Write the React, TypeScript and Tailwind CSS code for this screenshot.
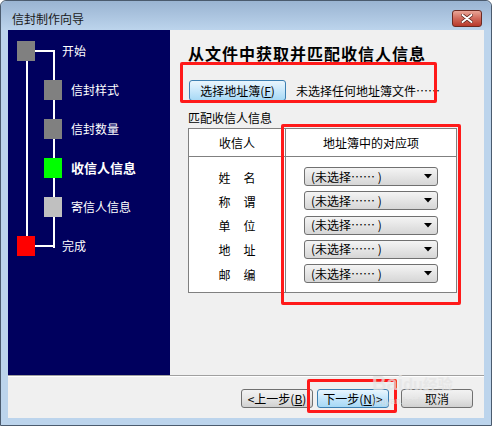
import { Fragment } from "react";

const font = "font-['SimSun','Noto_Sans_CJK_SC','Liberation_Sans',sans-serif]";

const steps = [
  { id: 1, name: "开始", color: "bg-[#808080]", top: true },
  { id: 2, name: "信封样式", color: "bg-[#808080]" },
  { id: 3, name: "信封数量", color: "bg-[#808080]" },
  { id: 4, name: "收信人信息", color: "bg-[#00ff00]", current: true },
  { id: 5, name: "寄信人信息", color: "bg-[#c0c0c0]" },
  { id: 6, name: "完成", color: "bg-[#ff0000]", top: true },
];

const fields = [
  ["姓", "名"],
  ["称", "谓"],
  ["单", "位"],
  ["地", "址"],
  ["邮", "编"],
];

const StepTree = () => (
  <div className="relative w-[162px] h-[345px] bg-[#00005e] pt-[1px]">
    {/* connecting lines */}
    <svg className="absolute inset-0" width="162" height="345">
      <rect x="18" y="30" width="2" height="176" fill="#fff" />
      <rect x="45" y="20" width="2" height="198" fill="#fff" />
      <rect x="27" y="20" width="19" height="2" fill="#fff" />
      <rect x="27" y="215" width="19" height="2" fill="#fff" />
    </svg>
    <div className="relative flex flex-col">
      {steps.map((s) => (
        <div key={s.id} className="h-[39px] flex items-center">
          <div
            className={`w-[18px] h-[20px] ${s.color} ${s.top ? "ml-[9px]" : "ml-[36px]"}`}
          />
          <span
            className={`text-white text-[12px] leading-[14px] ${
              s.top ? "ml-[27px]" : "ml-[9px]"
            } ${s.current ? "font-bold text-[13px]" : ""}`}
          >
            {s.name}
          </span>
        </div>
      ))}
    </div>
  </div>
);

const Select = () => (
  <div className="w-[134px] h-[19px] rounded-[3px] border border-[#707070] bg-gradient-to-b from-[#f4f4f4] to-[#d6d6d6] flex items-center pl-[6px] pr-[5px]">
    <span className="flex-1 text-[12px] leading-[14px] text-black">(未选择…… )</span>
    <svg width="8" height="5" viewBox="0 0 8 5">
      <path d="M0 0H8L4 4.5Z" fill="#000" />
    </svg>
  </div>
);

const Btn = ({ children, active }: { children: React.ReactNode; active?: boolean }) => (
  <div
    className={`w-[72px] h-[19px] rounded-[3px] border flex items-center justify-center text-[12px] leading-[14px] text-black ${
      active
        ? "border-[#3c7fb1] bg-gradient-to-b from-[#eaf6fd] via-[#c4e6fb] to-[#a7d9f5]"
        : "border-[#707070] bg-gradient-to-b from-[#f2f2f2] via-[#e6e6e6] to-[#d0d0d0]"
    }`}
  >
    {children}
  </div>
);

export default function App() {
  return (
    <div className={`relative w-[492px] h-[426px] overflow-hidden ${font}`}>
      <div className="w-[492px] h-[426px] bg-[#bcd4ec] border border-[#4b5b6e] rounded-t-[6px] flex flex-col">
        {/* title bar */}
        <div className="h-[29px] flex items-start bg-gradient-to-b from-[#9ab4d2] to-[#bcd4ec] rounded-t-[6px]">
          <span className="ml-[11px] mt-[11px] text-[12px] leading-[14px] text-[#1a1a1a]">
            信封制作向导
          </span>
          <div className="ml-auto mr-[9px] mt-[9px] w-[30px] h-[17px] rounded-[3px] border border-[#6b2a22] bg-gradient-to-b from-[#e9a698] via-[#d0695b] to-[#b8392b] flex items-center justify-center">
            <svg width="12" height="9" viewBox="0 0 12 9">
              <path
                d="M1.5 1 L10.5 8 M10.5 1 L1.5 8"
                stroke="#5a2018"
                strokeWidth="3.4"
                strokeLinecap="round"
              />
              <path
                d="M1.5 1 L10.5 8 M10.5 1 L1.5 8"
                stroke="#fff"
                strokeWidth="2"
                strokeLinecap="round"
              />
            </svg>
          </div>
        </div>

        {/* client area */}
        <div className="ml-[7px] w-[476px] h-[388px] bg-[#f0f0f0] flex flex-col">
          <div className="flex h-[345px]">
            <StepTree />
            <div className="flex-1 pl-[18px] pt-[13px] flex flex-col items-start">
              <h1 className="text-[16px] leading-[20px] font-bold tracking-[1px] text-black">
                从文件中获取并匹配收信人信息
              </h1>
              <div className="mt-[17px] ml-[1px] flex items-center">
                <div className="w-[97px] h-[21px] rounded-[3px] border border-[#3c7fb1] bg-gradient-to-b from-[#eaf6fd] via-[#c9e8fb] to-[#a7d9f5] flex items-center justify-center text-[12px] leading-[14px] text-black">
                  选择地址簿(<u>F</u>)
                </div>
                <span className="ml-[10px] text-[12px] leading-[14px] text-black">
                  未选择任何地址簿文件……
                </span>
              </div>
              <div className="mt-[10px] text-[12px] leading-[14px] text-black">匹配收信人信息</div>
              <div className="mt-[3px] w-[269px] h-[165px] border border-[#808080] bg-white flex flex-col">
                <div className="flex h-[28px] border-b border-[#808080]">
                  <div className="w-[97px] border-r border-[#808080] flex items-center justify-center text-[12px] text-black">
                    收信人
                  </div>
                  <div className="flex-1 flex items-center justify-center text-[12px] text-black">
                    地址簿中的对应项
                  </div>
                </div>
                <div className="flex flex-1">
                  <div className="w-[97px] border-r border-[#808080] pt-[11px] flex flex-col gap-[5.25px]">
                    {fields.map(([a, b]) => (
                      <div
                        key={a}
                        className="h-[19px] flex items-center justify-center gap-[13px] text-[12px] text-black"
                      >
                        <span>{a}</span>
                        <span>{b}</span>
                      </div>
                    ))}
                  </div>
                  <div className="flex-1 pt-[10px] flex flex-col items-center gap-[5.25px]">
                    {fields.map(([a]) => (
                      <Fragment key={a}>
                        <Select />
                      </Fragment>
                    ))}
                  </div>
                </div>
              </div>
            </div>
          </div>
          <div className="h-[2px] border-t border-[#a0a0a0] border-b border-b-white" />
          <div className="flex-1 flex items-start justify-end pt-[12px] pr-[11px]">
            <Btn>
              &lt;上一步(<u>B</u>)
            </Btn>
            <div className="ml-[4px]">
              <Btn active>
                下一步(<u>N</u>)&gt;
              </Btn>
            </div>
            <div className="ml-[12px]">
              <Btn>取消</Btn>
            </div>
          </div>
        </div>
      </div>

      {/* annotation boxes */}
      <div className="absolute left-[180px] top-[62px] w-[257px] h-[41px] border-[3px] border-[#ff1a1a] rounded-[2px]" />
      <div className="absolute left-[281px] top-[124px] w-[180px] h-[181px] border-[3px] border-[#ff1a1a] rounded-[2px]" />
      <div className="absolute left-[307px] top-[379px] w-[90px] h-[34px] border-[3px] border-[#ff1a1a] rounded-[2px]" />

      {/* watermark */}
      <div className="absolute left-[372px] top-[372px] flex flex-col items-start opacity-70 pointer-events-none">
        <span className="text-[20px] leading-[22px] font-bold text-[#e4e4e4] font-['Liberation_Sans',sans-serif]">
          Bai<span className="text-[16px]">du</span>
          <span className="text-[15px] font-['Noto_Sans_CJK_SC',sans-serif]">经验</span>
        </span>
        <span className="text-[9px] leading-[10px] text-[#dcdcdc] font-['Liberation_Sans',sans-serif]">
          jingyan.baidu.com
        </span>
      </div>
    </div>
  );
}
